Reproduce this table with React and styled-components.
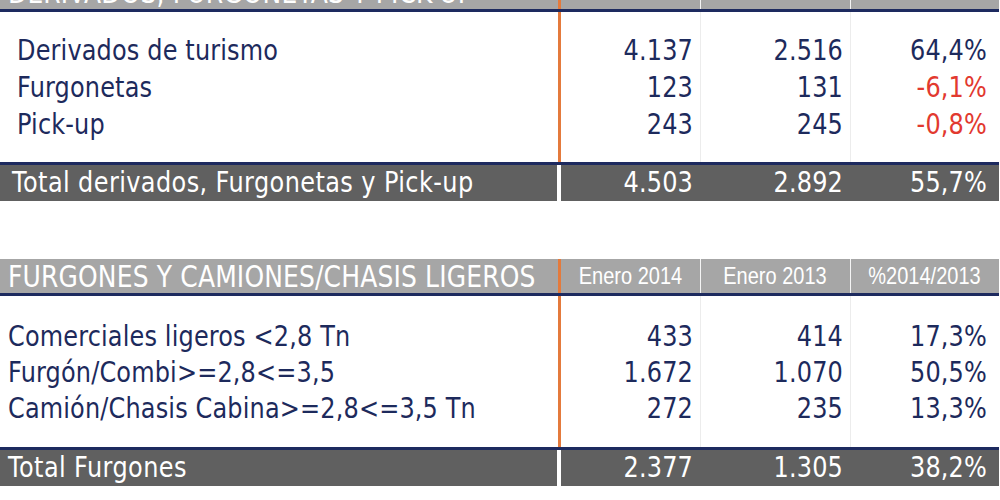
import styled, { createGlobalStyle } from "styled-components";

const GlobalStyle = createGlobalStyle`
  html, body {
    margin: 0;
    padding: 0;
    background: #ffffff;
    overflow: hidden;
  }
  body {
    font-family: "DejaVu Sans", Verdana, sans-serif;
  }
`;

const sections = [
  {
    title: "DERIVADOS, FURGONETAS Y PICK-UP",
    indent: 17,
    totalIndent: 12,
    rowHeight: 37,
    padTop: 20,
    padBottom: 19,
    gapTop: -25,
    rows: [
      ["Derivados de turismo", "4.137", "2.516", "64,4%"],
      ["Furgonetas", "123", "131", "-6,1%"],
      ["Pick-up", "243", "245", "-0,8%"],
    ],
    total: ["Total derivados, Furgonetas y Pick-up", "4.503", "2.892", "55,7%"],
  },
  {
    title: "FURGONES Y CAMIONES/CHASIS LIGEROS",
    indent: 8,
    totalIndent: 8,
    rowHeight: 36,
    padTop: 23,
    padBottom: 20,
    gapTop: 58,
    rows: [
      ["Comerciales ligeros <2,8 Tn", "433", "414", "17,3%"],
      ["Furgón/Combi>=2,8<=3,5", "1.672", "1.070", "50,5%"],
      ["Camión/Chasis Cabina>=2,8<=3,5 Tn", "272", "235", "13,3%"],
    ],
    total: ["Total Furgones", "2.377", "1.305", "38,2%"],
  },
];

const headers = ["Enero 2014", "Enero 2013", "%2014/2013"];

const COLS = "561px 139px 150px 149px";
const PADS = [7, 7, 12];

const lines = (sep) => `linear-gradient(
    to right,
    transparent 558px,
    #e47a3c 558px,
    #e47a3c 561px,
    transparent 561px,
    transparent 700px,
    ${sep} 700px,
    ${sep} 701px,
    transparent 701px,
    transparent 850px,
    ${sep} 850px,
    ${sep} 851px,
    transparent 851px
  )`;

const Page = styled.div`
  width: 999px;
`;

const Section = styled.section`
  margin-top: ${(p) => p.$gap}px;
`;

const Head = styled.div`
  display: grid;
  grid-template-columns: ${COLS};
  height: 34px;
  background-color: #a6a6a6;
  background-image: ${lines("#f4f4f4")};
  border-bottom: 3px solid #1d2a5f;
`;

const HeadTitle = styled.div`
  display: flex;
  align-items: center;
  padding-left: 8px;
  color: #ffffff;
  font-size: 25px;
  letter-spacing: 0.15px;
  white-space: nowrap;
`;

const HeadLabel = styled.div`
  display: flex;
  align-items: center;
  justify-content: center;
  color: #ffffff;
  font-family: "Liberation Sans", Arial, sans-serif;
  font-size: 20px;
`;

const Stretch = styled.span`
  display: inline-block;
  transform: scaleY(1.18);
  white-space: nowrap;
`;

const Body = styled.div`
  padding: ${(p) => p.$top}px 0 ${(p) => p.$bottom}px;
  background-image: ${lines("#ececec")};
`;

const Row = styled.div`
  display: grid;
  grid-template-columns: ${COLS};
  height: ${(p) => p.$h}px;
  align-items: center;
  color: #1d2a5c;
  font-size: 24px;
  letter-spacing: 0.15px;
`;

const Label = styled.div`
  padding-left: ${(p) => p.$indent}px;
  white-space: nowrap;
`;

const Num = styled.div`
  text-align: right;
  padding-right: ${(p) => p.$pad}px;
  color: ${(p) => (p.$neg ? "#e2392f" : "inherit")};
`;

const Total = styled.div`
  display: grid;
  grid-template-columns: 557px 438px;
  column-gap: 4px;
  border-top: 3px solid #1d2a5f;
  background: #ffffff;
  color: #ffffff;
  font-size: 24px;
`;

const TotalCell = styled.div`
  display: grid;
  grid-template-columns: ${(p) => p.$cols || "1fr"};
  align-items: center;
  height: 36px;
  background: #606060;
  padding-left: ${(p) => p.$indent || 0}px;
  letter-spacing: ${(p) => (p.$cols ? 0.15 : 0.4)}px;
  white-space: nowrap;
`;

const Table = ({ data }) => (
  <Section $gap={data.gapTop}>
    <Head>
      <HeadTitle>
        <Stretch>{data.title}</Stretch>
      </HeadTitle>
      {headers.map((h) => (
        <HeadLabel key={h}>
          <Stretch>{h}</Stretch>
        </HeadLabel>
      ))}
    </Head>
    <Body $top={data.padTop} $bottom={data.padBottom}>
      {data.rows.map((r) => (
        <Row key={r[0]} $h={data.rowHeight}>
          <Label $indent={data.indent}>
            <Stretch>{r[0]}</Stretch>
          </Label>
          {r.slice(1).map((v, i) => (
            <Num key={i} $pad={PADS[i]} $neg={v.startsWith("-")}>
              <Stretch>{v}</Stretch>
            </Num>
          ))}
        </Row>
      ))}
    </Body>
    <Total>
      <TotalCell $indent={data.totalIndent}>
        <Stretch>{data.total[0]}</Stretch>
      </TotalCell>
      <TotalCell $cols="139px 150px 149px">
        {data.total.slice(1).map((v, i) => (
          <Num key={i} $pad={PADS[i]}>
            <Stretch>{v}</Stretch>
          </Num>
        ))}
      </TotalCell>
    </Total>
  </Section>
);

export default function App() {
  return (
    <>
      <GlobalStyle />
      <Page>
        {sections.map((s) => (
          <Table key={s.title} data={s} />
        ))}
      </Page>
    </>
  );
}
